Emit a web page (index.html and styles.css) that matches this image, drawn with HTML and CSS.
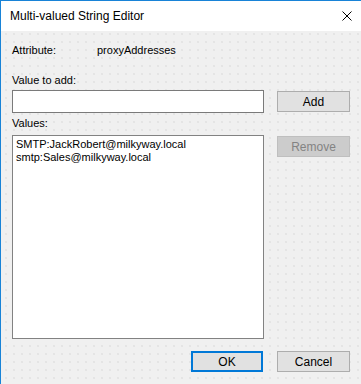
FILE: index.html
```html
<!DOCTYPE html>
<html lang="en">
<head>
    <meta charset="UTF-8">
    <title>Multi-valued String Editor</title>
    <link rel="stylesheet" href="styles.css">
</head>
<body>
    <div class="window">
        <div class="titlebar">
            <span class="title">Multi-valued String Editor</span>
            <svg class="close" width="10" height="10" viewBox="0 0 10 10">
                <path d="M0.5 0.5 L9.5 9.5 M9.5 0.5 L0.5 9.5" stroke="#000" stroke-width="1" fill="none"/>
            </svg>
        </div>
        <div class="content">
            <div class="attr-row">
                <span class="attr-label">Attribute:</span>
                <span>proxyAddresses</span>
            </div>
            <div class="label label-add">Value to add:</div>
            <div class="field-row">
                <input type="text" class="text-input">
                <button class="btn btn-side">Add</button>
            </div>
            <div class="label label-values">Values:</div>
            <div class="field-row list-row">
                <div class="listbox">
                    <div class="item">SMTP:JackRobert@milkyway.local</div>
                    <div class="item">smtp:Sales@milkyway.local</div>
                </div>
                <button class="btn btn-side" disabled>Remove</button>
            </div>
            <div class="footer">
                <button class="btn btn-ok">OK</button>
                <button class="btn">Cancel</button>
            </div>
        </div>
    </div>
</body>
</html>
```

FILE: styles.css
```css
body {
    margin: 0;
    font-family: "Liberation Sans", Arial, sans-serif;
    font-size: 11px;
    color: #000;
}
.window {
    width: 361px;
    height: 384px;
    box-sizing: border-box;
    border-top: 1px solid #1883d7;
    border-left: 1px solid #1883d7;
    display: flex;
    flex-direction: column;
    overflow: hidden;
}
.titlebar {
    height: 30px;
    background-color: white;
    display: flex;
    align-items: center;
    padding: 0 9px 0 9px;
}
.title {
    font-size: 12px;
    flex: 1;
}
.close {
    display: block;
}
.content {
    flex: 1;
    background-color: #f0f0f0;
    background-image: radial-gradient(circle at 1px 1px, #dedede 0.6px, transparent 0.9px);
    background-size: 8px 8px;
    background-position: 4px 2px;
    padding: 13px 11px 0 11px;
}
.attr-row {
    display: flex;
    line-height: 13px;
}
.attr-label {
    width: 85px;
}
.label {
    line-height: 13px;
}
.label-add {
    margin-top: 17px;
}
.label-values {
    margin-top: 4px;
}
.field-row {
    display: flex;
    gap: 13px;
    align-items: flex-start;
    margin-top: 3px;
}
.list-row {
    margin-top: 5px;
}
.text-input {
    width: 252px;
    height: 23px;
    box-sizing: border-box;
    margin: 0;
    border: 1px solid #7a7a7a;
    background: white;
    padding: 2px 3px;
    font: inherit;
}
.listbox {
    width: 252px;
    height: 204px;
    box-sizing: border-box;
    border: 1px solid #828282;
    background: white;
    padding: 2px 3px;
}
.item {
    line-height: 13px;
}
.btn {
    width: 73px;
    height: 21px;
    box-sizing: border-box;
    margin: 0;
    padding: 0;
    border: 1px solid #adadad;
    background-color: #e1e1e1;
    font: inherit;
    font-size: 12px;
    color: #000;
}
.btn-side {
    margin-top: 1px;
}
.btn:disabled {
    background-color: #cccccc;
    border-color: #bfbfbf;
    color: #838383;
}
.btn-ok {
    width: 72px;
    border: 2px solid #0078d7;
}
.footer {
    display: flex;
    justify-content: flex-end;
    gap: 14px;
    margin-top: 12px;
}
```
